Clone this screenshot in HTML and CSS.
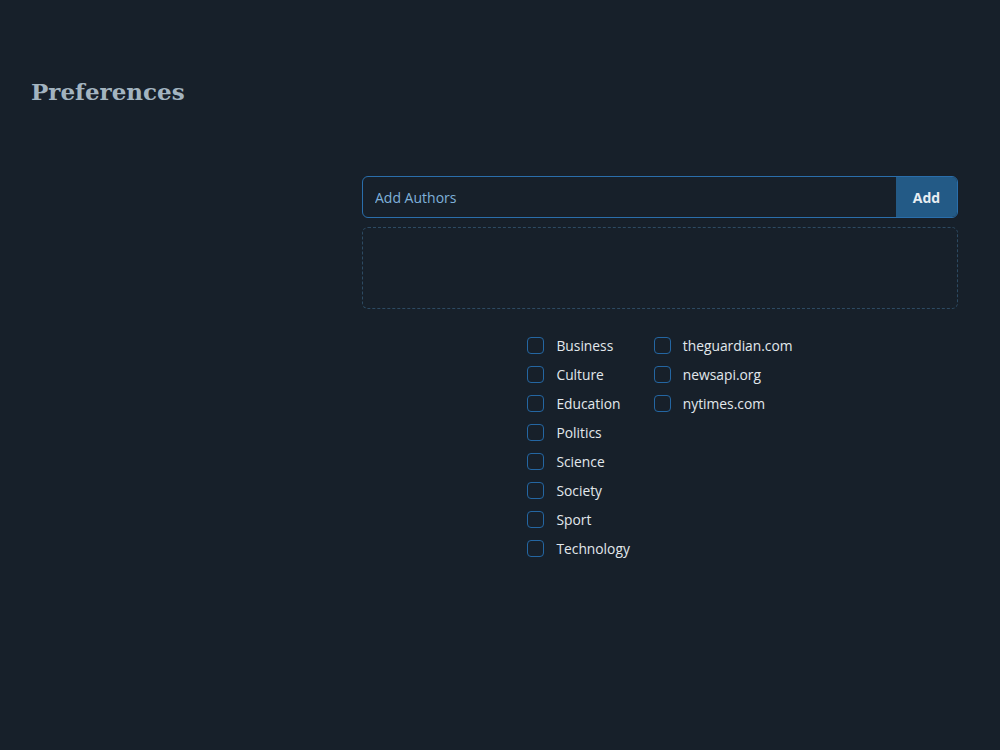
FILE: index.html
```html
<!DOCTYPE html>
<html lang="en">
<head>
  <meta charset="UTF-8" />
  <meta name="viewport" content="width=device-width, initial-scale=1.0"/>
  <title>Preferences</title>
  <link rel="stylesheet" href="styles.css">
</head>
<body>

  <div class="page">
    <h1>Preferences</h1>

    <div class="prefs">
      <!-- authors -->
      <form class="author-form" onsubmit="return false">
        <input type="text" placeholder="Add Authors" />
        <button type="submit">Add</button>
      </form>
      <div class="author-list"></div>

      <!-- categories + sources -->
      <div class="filters">
        <div class="filter-col">
          <label><input type="checkbox" /><span>Business</span></label>
          <label><input type="checkbox" /><span>Culture</span></label>
          <label><input type="checkbox" /><span>Education</span></label>
          <label><input type="checkbox" /><span>Politics</span></label>
          <label><input type="checkbox" /><span>Science</span></label>
          <label><input type="checkbox" /><span>Society</span></label>
          <label><input type="checkbox" /><span>Sport</span></label>
          <label><input type="checkbox" /><span>Technology</span></label>
        </div>
        <div class="filter-col">
          <label><input type="checkbox" /><span>theguardian.com</span></label>
          <label><input type="checkbox" /><span>newsapi.org</span></label>
          <label><input type="checkbox" /><span>nytimes.com</span></label>
        </div>
      </div>
    </div>
  </div>

</body>
</html>
```

FILE: styles.css
```css
body {
  margin: 0;
  background: #17202a;
  color: #e2e8ec;
  font-family: 'Open Sans', 'Noto Sans', sans-serif;
}
.page {
  padding: 76px 31px 0;
}
h1 {
  margin: 0;
  font-family: 'DejaVu Serif', serif;
  font-weight: bold;
  font-size: 23px;
  color: #a3b4c0;
  line-height: 32px;
}
.prefs {
  margin: 68px 11px 0 331px;
}
.author-form {
  display: flex;
  height: 42px;
  border: 1px solid #2a6eab;
  border-radius: 6px;
  box-sizing: border-box;
  overflow: hidden;
}
.author-form input {
  flex: 1;
  background: transparent;
  border: none;
  outline: none;
  padding: 0 12px;
  font-family: inherit;
  font-size: 14px;
  color: #e2e8ec;
}
.author-form input::placeholder {
  color: #7fb1da;
}
.author-form button {
  width: 61px;
  border: none;
  background: #235a86;
  color: #e8eef2;
  font-family: inherit;
  font-weight: bold;
  font-size: 14px;
  cursor: pointer;
}
.author-list {
  margin-top: 9px;
  height: 82px;
  border: 1px dashed #2d4a62;
  border-radius: 6px;
  box-sizing: border-box;
}
.filters {
  display: flex;
  justify-content: center;
  gap: 24px;
  margin-top: 22px;
}
.filter-col {
  display: flex;
  flex-direction: column;
}
.filter-col label {
  display: flex;
  align-items: center;
  gap: 12px;
  height: 29px;
  font-size: 13.8px;
  cursor: pointer;
}
.filter-col input {
  appearance: none;
  margin: 0;
  width: 17px;
  height: 17px;
  border: 1.5px solid #2466a2;
  border-radius: 4px;
  background: transparent;
  cursor: pointer;
}
```
